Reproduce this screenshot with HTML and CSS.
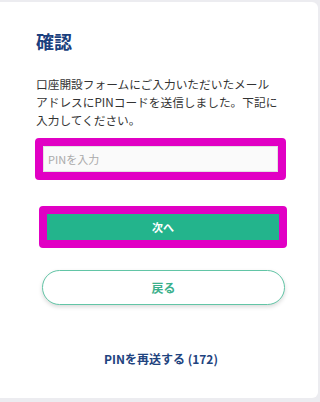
FILE: index.html
```html
<!DOCTYPE html>
<html lang="ja">
<head>
<meta charset="utf-8">
<link rel="stylesheet" href="styles.css">
</head>
<body>
<div class="card">
  <h1 class="title">確認</h1>
  <p class="desc">口座開設フォームにご入力いただいたメール<br>アドレスにPINコードを送信しました。下記に<br>入力してください。</p>
  <div class="hl hl-input">
    <input class="pin" type="text" placeholder="PINを入力">
  </div>
  <div class="hl hl-btn">
    <button class="next" type="button">次へ</button>
  </div>
  <button class="back" type="button">戻る</button>
  <a class="resend" href="#">PINを再送する (172)</a>
</div>
</body>
</html>
```
FILE: styles.css
```css
html, body {
  margin: 0;
  padding: 0;
}
body {
  background: #ececf0;
  width: 320px;
  height: 402px;
  overflow: hidden;
  font-family: "Noto Sans CJK JP", "Noto Sans", sans-serif;
}
.card {
  box-sizing: border-box;
  margin-top: 2px;
  width: 318px;
  height: 396px;
  background: #fff;
  border-radius: 0 6px 6px 0;
  padding: 27px 0 0 35px;
  display: flex;
  flex-direction: column;
  align-items: flex-start;
}
.title {
  margin: 0 0 0 1px;
  font-size: 18px;
  line-height: 24px;
  font-weight: 700;
  color: #1b407e;
}
.desc {
  margin: 22px 0 0 1px;
  font-size: 11.7px;
  line-height: 17.8px;
  color: #333;
}
.hl {
  border: 8px solid #e100c4;
  border-radius: 4px;
  display: flex;
}
.hl-input {
  margin-top: 10px;
  width: 235px;
}
.pin {
  box-sizing: border-box;
  width: 235px;
  height: 26px;
  margin: 0;
  border: 1px solid #e2e2e2;
  background: #fafafa;
  padding: 0 0 0 4px;
  font-family: inherit;
  font-size: 11px;
  color: #333;
  outline: none;
}
.pin::placeholder {
  color: #aaa;
}
.hl-btn {
  margin: 26px 0 0 4px;
  width: 232px;
}
.next {
  width: 232px;
  height: 26px;
  margin: 0;
  border: none;
  background: #23b48c;
  color: #fff;
  font-family: inherit;
  font-size: 11px;
  font-weight: 700;
  padding: 0;
}
.back {
  margin: 22px 0 0 7px;
  width: 243px;
  height: 35px;
  border: 1.5px solid #62c5a6;
  border-radius: 18px;
  background: #fff;
  box-shadow: 0 2px 4px rgba(0, 0, 0, 0.15);
  color: #3bb08c;
  font-family: inherit;
  font-size: 12px;
  font-weight: 700;
  padding: 0;
}
.resend {
  align-self: stretch;
  margin: 45px 35px 0 4px;
  text-align: center;
  font-size: 12px;
  line-height: 17px;
  font-weight: 700;
  color: #1f447f;
  text-decoration: none;
}
```
